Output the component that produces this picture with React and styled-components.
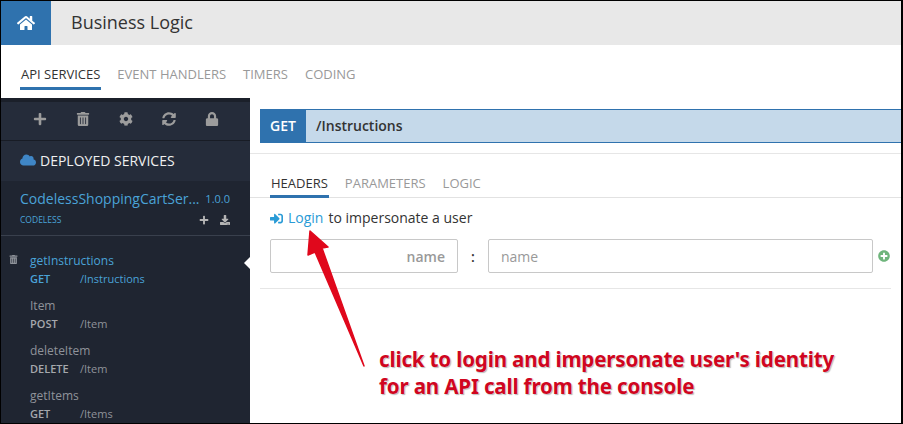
import React from 'react';
import styled, { createGlobalStyle } from 'styled-components';
import { FaHome, FaPlus, FaTrashAlt, FaCog, FaSyncAlt, FaLock, FaCloud, FaDownload, FaSignInAlt, FaPlusCircle } from 'react-icons/fa';

const GlobalStyle = createGlobalStyle`
  html, body { margin: 0; padding: 0; background: #fff; }
  * { box-sizing: border-box; }
`;

const Frame = styled.div`
  position: relative;
  width: 903px;
  height: 424px;
  overflow: hidden;
  background: #fff;
  border: solid #000;
  border-width: 1px 2px 1px 1px;
  font-family: "Open Sans", sans-serif;
  display: flex;
  flex-direction: column;
`;

const Header = styled.div`
  display: flex;
  align-items: center;
  height: 44px;
  flex: none;
  background: #e8e8e8;
`;

const HomeButton = styled.div`
  width: 50px;
  height: 44px;
  background: #2f72ae;
  color: #fff;
  font-size: 18px;
  display: flex;
  align-items: center;
  justify-content: center;
`;

const Title = styled.div`
  margin: -2px 0 0 20px;
  font-size: 18px;
  color: #333;
`;

const TopTabs = styled.div`
  display: flex;
  gap: 15px;
  height: 53px;
  flex: none;
  padding: 20px 0 0 19px;
`;

const Tab = styled.div`
  height: ${({ $h }) => $h || 25}px;
  padding: 0 1px;
  font-size: 13px;
  line-height: 18px;
  color: ${({ $active }) => ($active ? '#333' : '#999')};
  border-bottom: 3px solid ${({ $active }) => ($active ? '#2f72ae' : 'transparent')};
`;

const Body = styled.div`
  display: flex;
  flex: 1;
  min-height: 0;
`;

const Sidebar = styled.div`
  width: 249px;
  flex: none;
  background: #1f2531;
  display: flex;
  flex-direction: column;
  overflow: hidden;
`;

const Toolbar = styled.div`
  height: 43px;
  flex: none;
  background: #252c3a;
  border-top: 4px solid #1b202a;
  border-bottom: 1px solid #181c25;
  display: flex;
  align-items: center;
  padding: 0 0 4px 32px;
  gap: 29px;
  color: #9c9c9c;
  font-size: 14px;
  svg { width: 14px; }
`;

const Deployed = styled.div`
  height: 40px;
  flex: none;
  background: #252c3a;
  display: flex;
  align-items: center;
  gap: 4px;
  padding: 0 0 2px 19px;
  color: #f0f0f0;
  font-size: 14px;
  svg { color: #3f86c6; font-size: 16px; }
`;

const Service = styled.div`
  height: 55px;
  flex: none;
  padding: 8px 20px 0 19px;
  background: #1f2531;
  border-bottom: 1px solid #39404d;
`;

const ServiceRow = styled.div`
  display: flex;
  justify-content: space-between;
  align-items: center;
  color: #4aa3d8;
  margin-top: ${({ $gap }) => $gap || 0}px;
`;

const ServiceName = styled.span`
  font-size: 14px;
`;

const Version = styled.span`
  font-size: 11px;
`;

const ServiceTag = styled.span`
  font-size: 8.5px;
`;

const ServiceIcons = styled.span`
  display: flex;
  gap: 11px;
  color: #b5b5b5;
  font-size: 10px;
`;

const Methods = styled.div`
  padding-top: 15px;
  display: flex;
  flex-direction: column;
  gap: 11px;
`;

const Method = styled.div`
  position: relative;
  padding-left: 29px;
  height: 34px;
  color: ${({ $active }) => ($active ? '#4aa3d8' : '#8f939a')};
`;

const MethodName = styled.div`
  font-size: 12px;
  line-height: 19px;
`;

const MethodRow = styled.div`
  display: flex;
  font-size: 11px;
  line-height: 17px;
`;

const Verb = styled.span`
  width: 50px;
  font-weight: 600;
  color: ${({ $active }) => ($active ? '#4aa3d8' : '#a5a8ad')};
`;

const RowTrash = styled.span`
  position: absolute;
  left: 8px;
  top: 3px;
  font-size: 9px;
  color: #8f939a;
`;

const Caret = styled.span`
  position: absolute;
  right: 0;
  top: 6px;
  border: 6px solid transparent;
  border-right-color: #fff;
  border-left-width: 0;
`;

const Main = styled.div`
  flex: 1;
  min-width: 0;
`;

const Bar = styled.div`
  margin: 11px 0 0 10px;
  height: 34px;
  display: flex;
  background: #c5d9ea;
  border: solid #2f72ae;
  border-width: 1px 0;
  color: #333;
  font-size: 14px;
  font-weight: 600;
  line-height: 32px;
`;

const BarVerb = styled.div`
  width: 46px;
  margin: -1px 0;
  height: 34px;
  line-height: 34px;
  background: #2f72ae;
  color: #fff;
  text-align: center;
  font-size: 14px;
`;

const BarPath = styled.div`
  padding-left: 10px;
`;

const SubTabs = styled.div`
  margin-top: 10px;
  height: 45px;
  padding: 20px 0 0 20px;
  display: flex;
  gap: 15px;
  border-top: 1px solid #e6e6e6;
  border-bottom: 1px solid #e2e2e2;
`;

const LoginLine = styled.div`
  margin: 11px 0 0 20px;
  font-size: 14px;
  line-height: 18px;
  color: #333;
  display: flex;
  align-items: center;
  gap: 5px;
`;

const LoginLink = styled.span`
  color: #2a9bd6;
  display: flex;
  align-items: center;
  gap: 5px;
  svg { font-size: 13px; }
`;

const Fields = styled.div`
  margin: 12px 0 0 20px;
  display: flex;
  align-items: center;
`;

const Field = styled.div`
  width: ${({ $w }) => $w}px;
  height: 34px;
  border: 1px solid #c8c8c8;
  border-radius: 2px;
  padding: 0 12px;
  font-size: 14px;
  line-height: 33px;
  text-align: ${({ $right }) => ($right ? 'right' : 'left')};
  font-weight: ${({ $right }) => ($right ? 600 : 400)};
  color: #999;
`;

const Colon = styled.div`
  width: 30px;
  text-align: center;
  font-weight: 600;
  font-size: 14px;
  color: #333;
`;

const AddIcon = styled.span`
  margin-left: 5px;
  display: flex;
  color: #6fb57c;
  font-size: 12px;
`;

const Rule = styled.div`
  margin: 15px 10px 0 10px;
  border-top: 1px solid #e6e6e6;
`;

const Arrow = styled.svg`
  position: absolute;
  left: 0;
  top: 0;
  pointer-events: none;
`;

const Note = styled.div`
  position: absolute;
  left: 378px;
  top: 345px;
  font-family: "Noto Sans", sans-serif;
  font-weight: 700;
  font-size: 20.6px;
  letter-spacing: -0.18px;
  line-height: 27px;
  white-space: nowrap;
  color: #d0061f;
  text-shadow: 0 0 2px #fff, 1px 1px 1px #aaa;
`;

const methods = [
  { name: 'getInstructions', verb: 'GET', path: '/Instructions', active: true },
  { name: 'Item', verb: 'POST', path: '/Item' },
  { name: 'deleteItem', verb: 'DELETE', path: '/Item' },
  { name: 'getItems', verb: 'GET', path: '/Items' },
];

export default function App() {
  return (
    <>
      <GlobalStyle />
      <Frame>
        <Header>
          <HomeButton><FaHome /></HomeButton>
          <Title>Business Logic</Title>
        </Header>
        <TopTabs>
          <Tab $active>API SERVICES</Tab>
          <Tab>EVENT HANDLERS</Tab>
          <Tab>TIMERS</Tab>
          <Tab>CODING</Tab>
        </TopTabs>
        <Body>
          <Sidebar>
            <Toolbar>
              <FaPlus /><FaTrashAlt /><FaCog /><FaSyncAlt /><FaLock />
            </Toolbar>
            <Deployed><FaCloud /> DEPLOYED SERVICES</Deployed>
            <Service>
              <ServiceRow>
                <ServiceName>CodelessShoppingCartSer...</ServiceName>
                <Version>1.0.0</Version>
              </ServiceRow>
              <ServiceRow $gap={6}>
                <ServiceTag>CODELESS</ServiceTag>
                <ServiceIcons><FaPlus /><FaDownload /></ServiceIcons>
              </ServiceRow>
            </Service>
            <Methods>
              {methods.map(m => (
                <Method key={m.name} $active={m.active}>
                  {m.active && <RowTrash><FaTrashAlt /></RowTrash>}
                  {m.active && <Caret />}
                  <MethodName>{m.name}</MethodName>
                  <MethodRow>
                    <Verb $active={m.active}>{m.verb}</Verb>
                    <span>{m.path}</span>
                  </MethodRow>
                </Method>
              ))}
            </Methods>
          </Sidebar>
          <Main>
            <Bar>
              <BarVerb>GET</BarVerb>
              <BarPath>/Instructions</BarPath>
            </Bar>
            <SubTabs>
              <Tab $active $h={24}>HEADERS</Tab>
              <Tab $h={24}>PARAMETERS</Tab>
              <Tab $h={24}>LOGIC</Tab>
            </SubTabs>
            <LoginLine>
              <LoginLink><FaSignInAlt /> Login</LoginLink> to impersonate a user
            </LoginLine>
            <Fields>
              <Field $w={188} $right>name</Field>
              <Colon>:</Colon>
              <Field $w={385}>name</Field>
              <AddIcon><FaPlusCircle /></AddIcon>
            </Fields>
            <Rule />
          </Main>
        </Body>
        <Arrow width="903" height="424" viewBox="0 0 903 424">
          <polygon points="310,231 328,247 322,248 364,366 315,252 308,255" fill="#e0081c" stroke="#e0081c" strokeWidth="1.5" strokeLinejoin="round" transform="translate(-1,-1)" />
        </Arrow>
        <Note>click to login and impersonate user's identity<br />for an API call from the console</Note>
      </Frame>
    </>
  );
}
